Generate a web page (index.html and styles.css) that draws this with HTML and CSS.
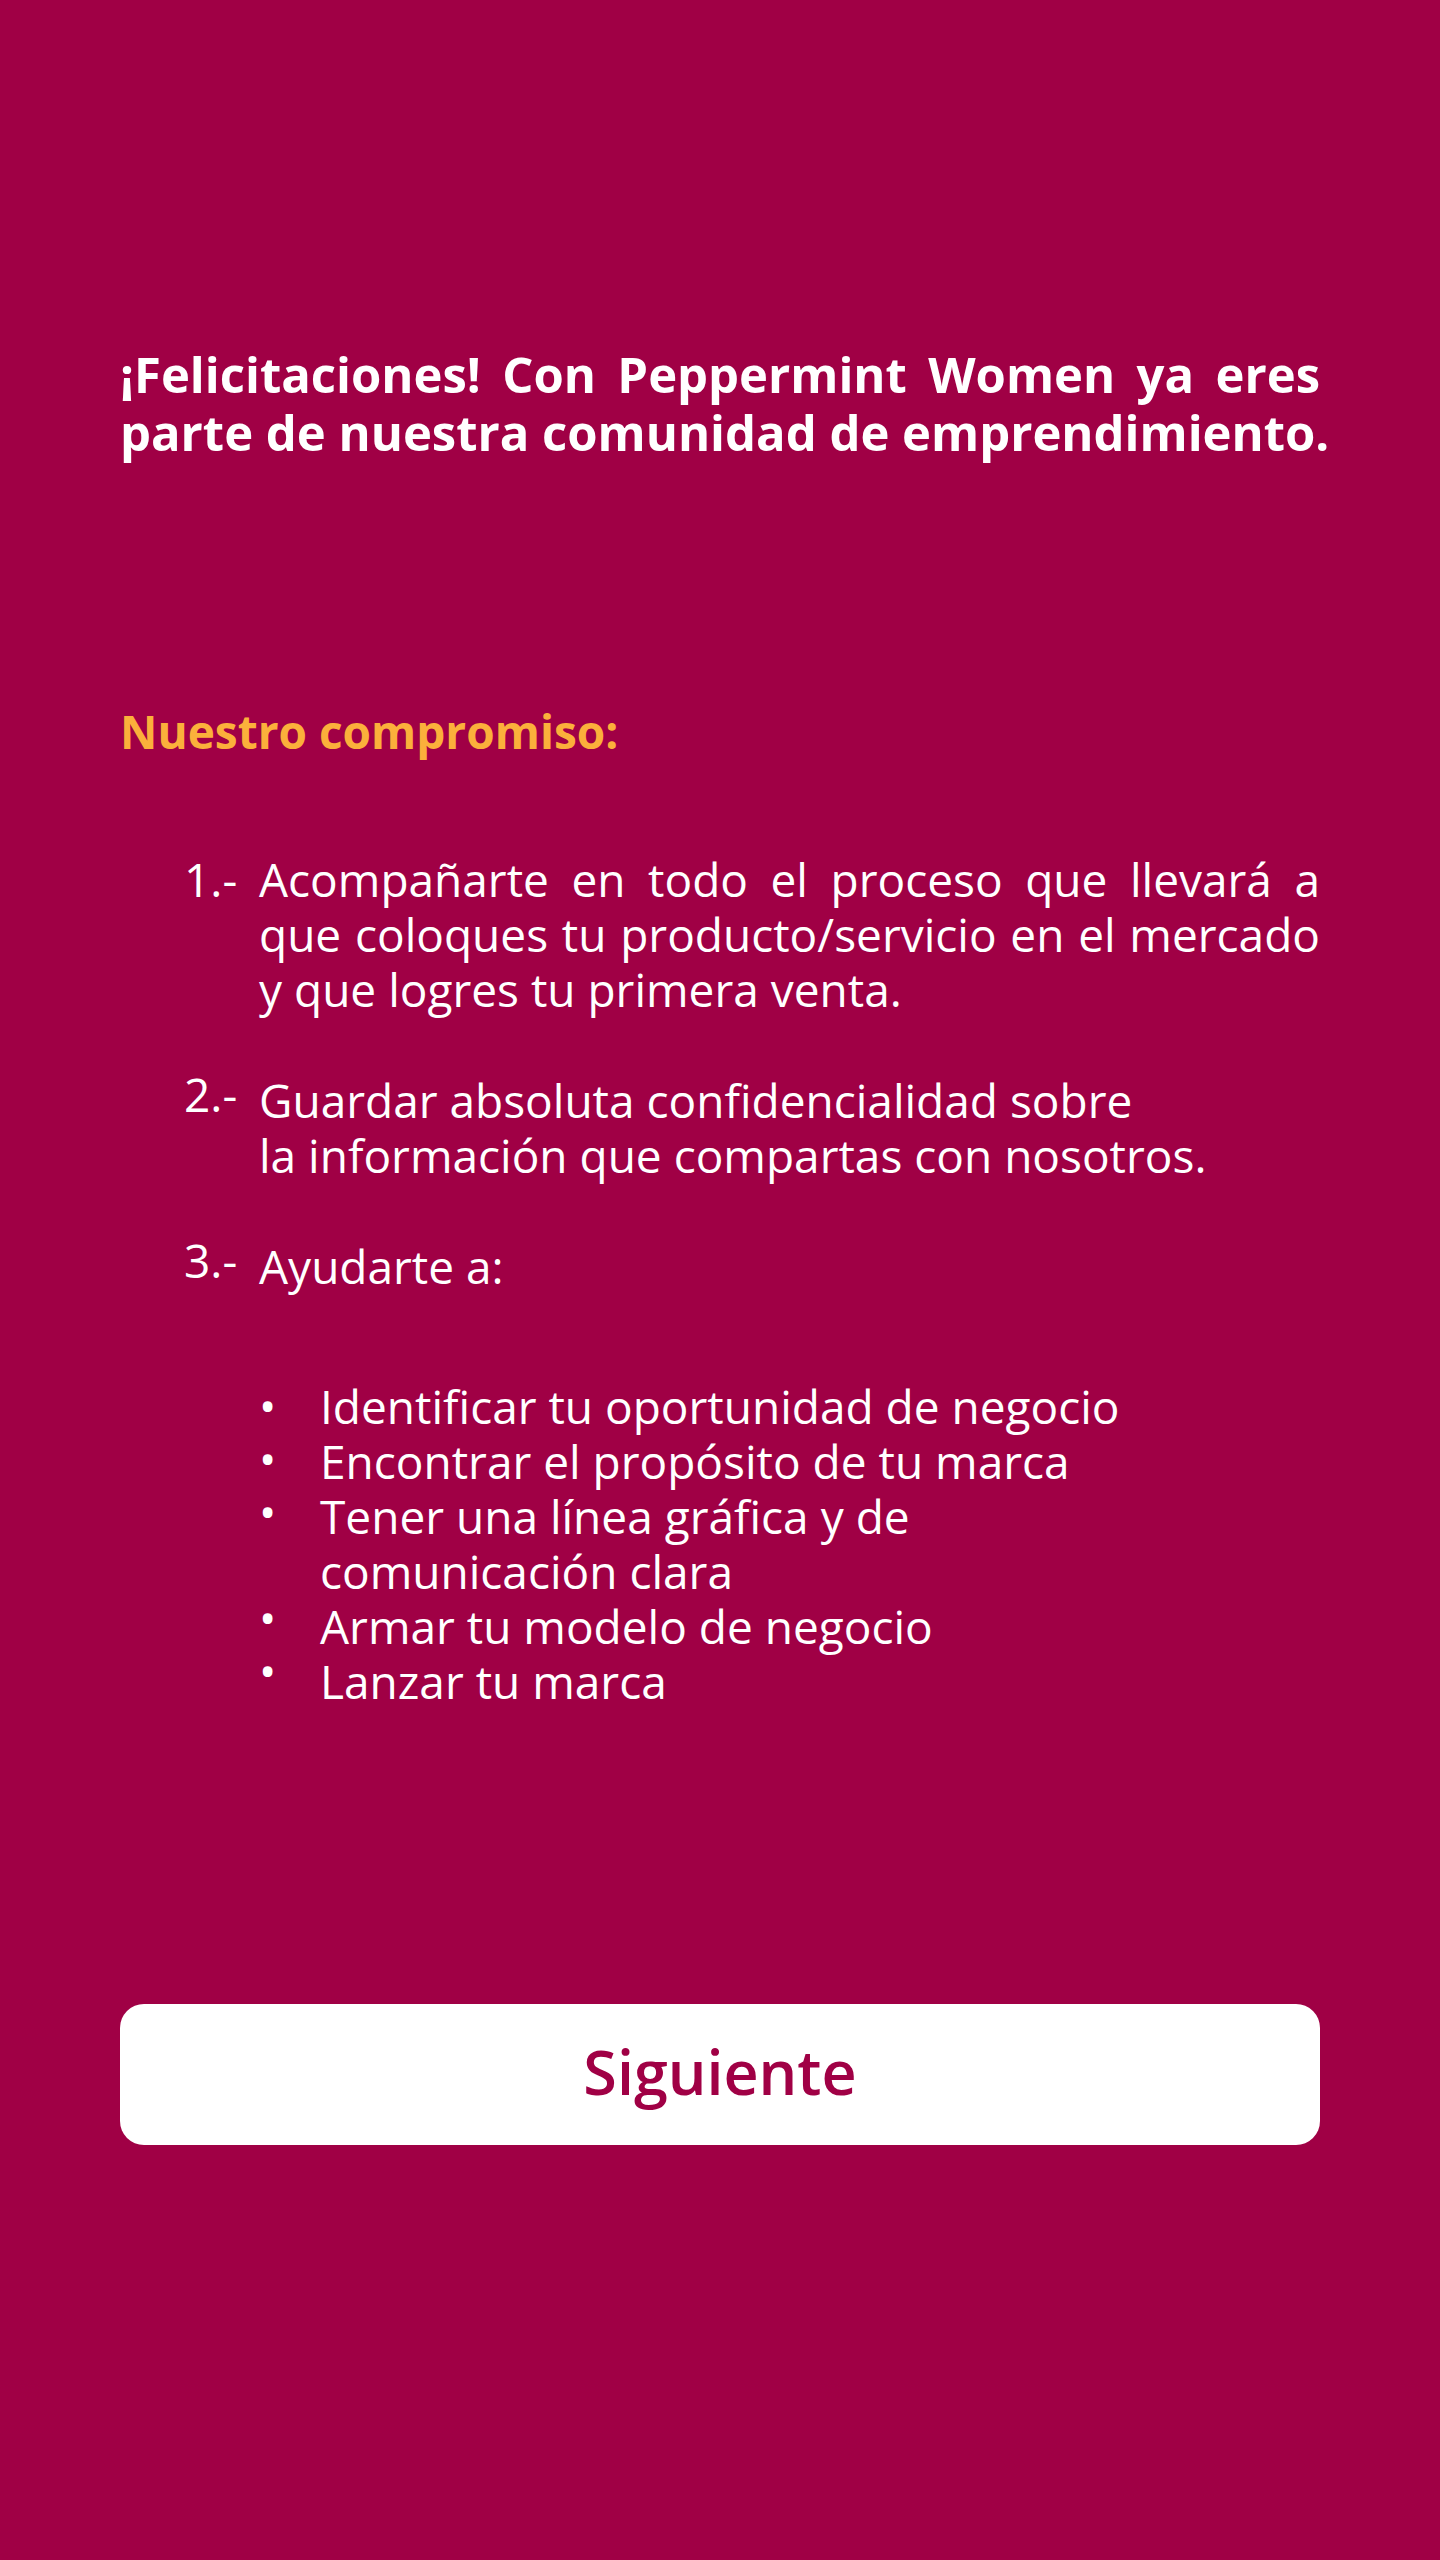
FILE: index.html
```html
<!DOCTYPE html>
<html lang="es">
<head>
<meta charset="utf-8">
<meta name="viewport" content="width=device-width, initial-scale=1">
<title>Peppermint Women</title>
<link rel="stylesheet" href="styles.css">
</head>
<body>
<main class="page">
  <h1 class="welcome"><span class="line spread">¡Felicitaciones! Con Peppermint Women ya eres</span> <span class="line">parte de nuestra comunidad de emprendimiento.</span></h1>
  <h2 class="subtitle">Nuestro compromiso:</h2>
  <div class="promises">
    <div class="promise">
      <span class="number">1.-</span>
      <p class="text"><span class="line spread">Acompañarte en todo el proceso que llevará a</span> <span class="line spread">que coloques tu producto/servicio en el mercado</span> <span class="line">y que logres tu primera venta.</span></p>
    </div>
    <div class="promise">
      <span class="number raised">2.-</span>
      <p class="text">Guardar absoluta confidencialidad sobre<br>la información que compartas con nosotros.</p>
    </div>
    <div class="promise">
      <span class="number raised">3.-</span>
      <p class="text">Ayudarte a:</p>
    </div>
  </div>
  <div class="goals">
    <div class="bullets" aria-hidden="true"><span>•</span><span>•</span><span class="tall">•</span><span>•</span><span>•</span></div>
    <ul class="goal-list">
      <li>Identificar tu oportunidad de negocio</li>
      <li>Encontrar el propósito de tu marca</li>
      <li>Tener una línea gráfica y de<br>comunicación clara</li>
      <li>Armar tu modelo de negocio</li>
      <li>Lanzar tu marca</li>
    </ul>
  </div>
  <button class="next" type="button">Siguiente</button>
</main>
</body>
</html>
```
FILE: styles.css
```css
* {
  box-sizing: border-box;
  margin: 0;
  padding: 0;
}

body {
  min-height: 100vh;
  background: #a00045;
  color: #fff;
  font-family: "Open Sans", "Noto Sans", sans-serif;
}

.page {
  display: flex;
  flex-direction: column;
  padding: 345px 120px 120px;
}

.line {
  display: block;
  white-space: nowrap;
}

.spread {
  text-align: justify;
  text-align-last: justify;
}

.welcome {
  font-size: 49px;
  font-weight: 700;
  line-height: 58px;
}

.subtitle {
  margin-top: 240px;
  color: #fbb03b;
  font-size: 46px;
  font-weight: 700;
  line-height: 60px;
}

.promises {
  display: flex;
  flex-direction: column;
  gap: 56px;
  margin-top: 91px;
  padding-left: 64px;
  font-size: 46px;
  line-height: 55px;
}

.promise {
  display: grid;
  grid-template-columns: 75px 1fr;
}

.raised {
  margin-top: -6px;
}

.goals {
  display: grid;
  grid-template-columns: 61px 1fr;
  margin-top: 85px;
  padding-left: 139px;
  font-size: 46px;
  line-height: 55px;
}

.bullets {
  display: flex;
  flex-direction: column;
  line-height: 53px;
}

.tall {
  height: 106px;
}

.goal-list {
  list-style: none;
}

.next {
  height: 141px;
  margin-top: 295px;
  padding-bottom: 6px;
  border: 0;
  border-radius: 24px;
  background: #fff;
  color: #a00045;
  font-family: inherit;
  font-size: 61px;
  font-weight: 600;
}
```
